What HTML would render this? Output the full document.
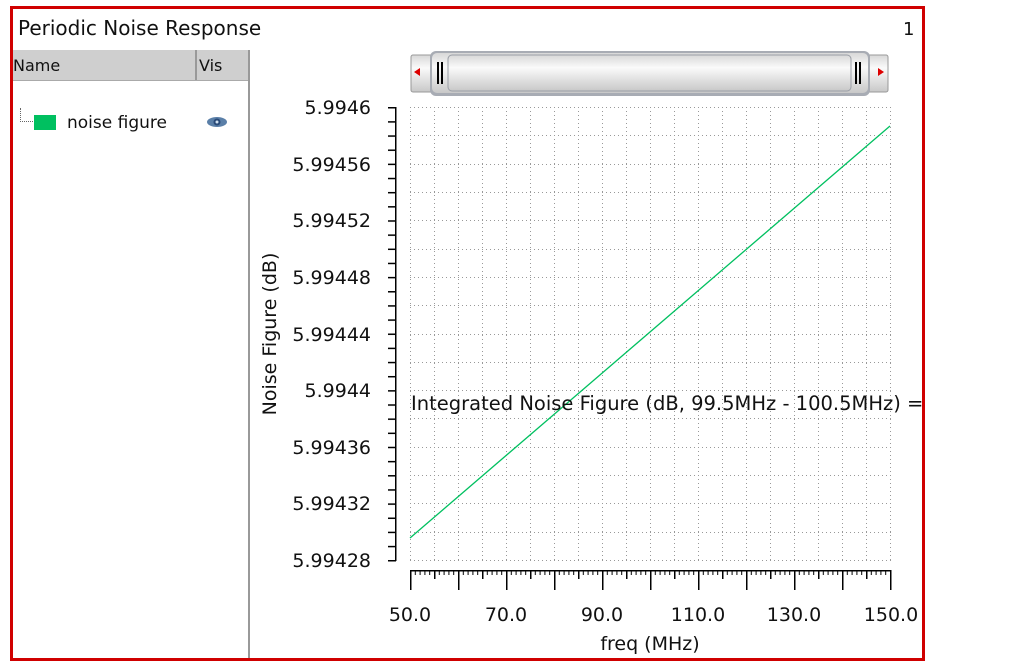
<!DOCTYPE html>
<html><head><meta charset="utf-8"><style>
html,body{margin:0;padding:0;background:#fff;width:1013px;height:666px;overflow:hidden;font-family:"DejaVu Sans","Liberation Sans",sans-serif;}
.frame{position:absolute;left:10px;top:6px;width:909px;height:649px;border:3px solid #d00000;background:#fff;}
.title{position:absolute;left:18px;top:16px;font-size:20px;color:#111;}
.num{position:absolute;left:903px;top:19px;font-size:18px;color:#111;}
.panel{position:absolute;left:13px;top:50px;width:235px;height:608px;border-right:2px solid #999;background:#fff;}
.hdr{position:absolute;left:0;top:0;width:235px;height:30px;background:#cfcfcf;border-bottom:1px solid #aaa;}
.hdr span{position:absolute;top:6px;font-size:16px;color:#111;}
.vsep{position:absolute;left:182px;top:0;width:2px;height:30px;background:#999;}
</style></head><body>
<div class="frame"></div>
<div class="title">Periodic Noise Response</div>
<div class="num">1</div>
<div class="panel">
 <div class="hdr"><span style="left:0">Name</span><div class="vsep"></div><span style="left:186px">Vis</span></div>
 <div style="position:absolute;left:7px;top:58px;width:12px;height:13px;border-left:1px dotted #666;border-bottom:1px dotted #666;"></div>
 <div style="position:absolute;left:21px;top:65px;width:22px;height:15px;background:#00c060;"></div>
 <div style="position:absolute;left:54px;top:63px;font-size:17px;color:#111;">noise figure</div>
 <svg style="position:absolute;left:193px;top:65px" width="22" height="14"><ellipse cx="11" cy="7" rx="10" ry="5" fill="#5a7fa8"/><circle cx="11" cy="7" r="3.5" fill="#2a4a78"/><circle cx="11" cy="7" r="1.5" fill="#cfe0f0"/></svg>
</div>
<svg style="position:absolute;left:0;top:0" width="1013" height="666">
 <defs>
  <linearGradient id="g" x1="0" y1="0" x2="0" y2="1"><stop offset="0" stop-color="#d8d8d8"/><stop offset="0.35" stop-color="#fafafa"/><stop offset="1" stop-color="#c8c8c8"/></linearGradient>
  <pattern id="xt" x="410" y="0" width="4.8" height="666" patternUnits="userSpaceOnUse"><rect x="0" y="570" width="1" height="5" fill="#000"/></pattern>
  <pattern id="xm" x="410" y="0" width="24" height="666" patternUnits="userSpaceOnUse"><rect x="0" y="570" width="1.5" height="9" fill="#000"/></pattern>
  <pattern id="xM" x="410" y="0" width="48" height="666" patternUnits="userSpaceOnUse"><rect x="0" y="570" width="1.5" height="20" fill="#000"/></pattern>
  <pattern id="yt" x="0" y="107" width="1013" height="14.156" patternUnits="userSpaceOnUse"><rect x="388" y="0" width="8" height="1.5" fill="#000"/></pattern>
 </defs>
 <!-- scrollbar -->
 <rect x="411" y="55" width="22" height="37" rx="2" fill="url(#g)" stroke="#999"/>
 <polygon points="414,72 420,68 420,76" fill="#d00"/>
 <rect x="866" y="55" width="22" height="37" rx="2" fill="url(#g)" stroke="#999"/>
 <polygon points="884,72 878,68 878,76" fill="#d00"/>
 <rect x="430" y="51" width="440" height="45" rx="6" fill="#a8acb4"/>
 <rect x="432" y="53" width="436" height="40" rx="5" fill="url(#g)"/>
 <rect x="448" y="55" width="403" height="36" rx="4" fill="url(#g)" stroke="#9a9ea6"/>
 <rect x="437" y="62" width="2" height="22" fill="#000"/><rect x="441" y="62" width="2" height="22" fill="#000"/>
 <rect x="855" y="62" width="2" height="22" fill="#000"/><rect x="859" y="62" width="2" height="22" fill="#000"/>
 <!-- grid -->
 <g stroke="#999" stroke-width="1" stroke-dasharray="1,3">
  <line x1="410.5" y1="107" x2="410.5" y2="561"/><line x1="434.5" y1="107" x2="434.5" y2="561"/><line x1="458.5" y1="107" x2="458.5" y2="561"/><line x1="482.5" y1="107" x2="482.5" y2="561"/><line x1="506.5" y1="107" x2="506.5" y2="561"/><line x1="530.5" y1="107" x2="530.5" y2="561"/><line x1="554.5" y1="107" x2="554.5" y2="561"/><line x1="578.5" y1="107" x2="578.5" y2="561"/><line x1="602.5" y1="107" x2="602.5" y2="561"/><line x1="626.5" y1="107" x2="626.5" y2="561"/><line x1="650.5" y1="107" x2="650.5" y2="561"/><line x1="674.5" y1="107" x2="674.5" y2="561"/><line x1="698.5" y1="107" x2="698.5" y2="561"/><line x1="722.5" y1="107" x2="722.5" y2="561"/><line x1="746.5" y1="107" x2="746.5" y2="561"/><line x1="770.5" y1="107" x2="770.5" y2="561"/><line x1="794.5" y1="107" x2="794.5" y2="561"/><line x1="818.5" y1="107" x2="818.5" y2="561"/><line x1="842.5" y1="107" x2="842.5" y2="561"/><line x1="866.5" y1="107" x2="866.5" y2="561"/><line x1="890.5" y1="107" x2="890.5" y2="561"/>
  <line x1="410" y1="107.5" x2="891" y2="107.5"/><line x1="410" y1="135.5" x2="891" y2="135.5"/><line x1="410" y1="164.5" x2="891" y2="164.5"/><line x1="410" y1="192.5" x2="891" y2="192.5"/><line x1="410" y1="220.5" x2="891" y2="220.5"/><line x1="410" y1="249.5" x2="891" y2="249.5"/><line x1="410" y1="277.5" x2="891" y2="277.5"/><line x1="410" y1="305.5" x2="891" y2="305.5"/><line x1="410" y1="334.5" x2="891" y2="334.5"/><line x1="410" y1="362.5" x2="891" y2="362.5"/><line x1="410" y1="390.5" x2="891" y2="390.5"/><line x1="410" y1="418.5" x2="891" y2="418.5"/><line x1="410" y1="447.5" x2="891" y2="447.5"/><line x1="410" y1="475.5" x2="891" y2="475.5"/><line x1="410" y1="503.5" x2="891" y2="503.5"/><line x1="410" y1="532.5" x2="891" y2="532.5"/><line x1="410" y1="560.5" x2="891" y2="560.5"/>
 </g>
 <!-- y axis -->
 <rect x="395" y="107" width="1.5" height="454" fill="#000"/>
 <rect x="380" y="107" width="20" height="455" fill="url(#yt)"/>
 <!-- x axis -->
 <rect x="410" y="570" width="481" height="1.5" fill="#000"/>
 <rect x="410" y="560" width="481" height="40" fill="url(#xt)"/>
 <rect x="410" y="560" width="482" height="40" fill="url(#xm)"/>
 <rect x="410" y="560" width="482" height="40" fill="url(#xM)"/>
 <!-- curve -->
 <line x1="410" y1="538" x2="890" y2="126" stroke="#00c060" stroke-width="1.3"/>
 <g font-family="DejaVu Sans, Liberation Sans, sans-serif" font-size="19" fill="#111" text-anchor="end">
  <text x="371" y="114">5.9946</text>
  <text x="371" y="171">5.99456</text>
  <text x="371" y="227">5.99452</text>
  <text x="371" y="284">5.99448</text>
  <text x="371" y="341">5.99444</text>
  <text x="371" y="397">5.9944</text>
  <text x="371" y="454">5.99436</text>
  <text x="371" y="510">5.99432</text>
  <text x="371" y="567">5.99428</text>
 </g>
 <g font-family="DejaVu Sans, Liberation Sans, sans-serif" font-size="19" fill="#111" text-anchor="middle">
  <text x="410" y="621">50.0</text>
  <text x="506" y="621">70.0</text>
  <text x="602" y="621">90.0</text>
  <text x="698" y="621">110.0</text>
  <text x="794" y="621">130.0</text>
  <text x="891" y="621">150.0</text>
  <text x="650" y="650">freq (MHz)</text>
  <text transform="translate(276,334) rotate(-90)">Noise Figure (dB)</text>
 </g>
 <text x="411" y="410" font-family="DejaVu Sans, Liberation Sans, sans-serif" font-size="19.5" fill="#111">Integrated Noise Figure (dB, 99.5MHz - 100.5MHz) =</text>
 <rect x="925" y="0" width="88" height="666" fill="#fff"/>
 <rect x="922" y="6" width="3" height="655" fill="#d00000"/>
</svg>
</body></html>
